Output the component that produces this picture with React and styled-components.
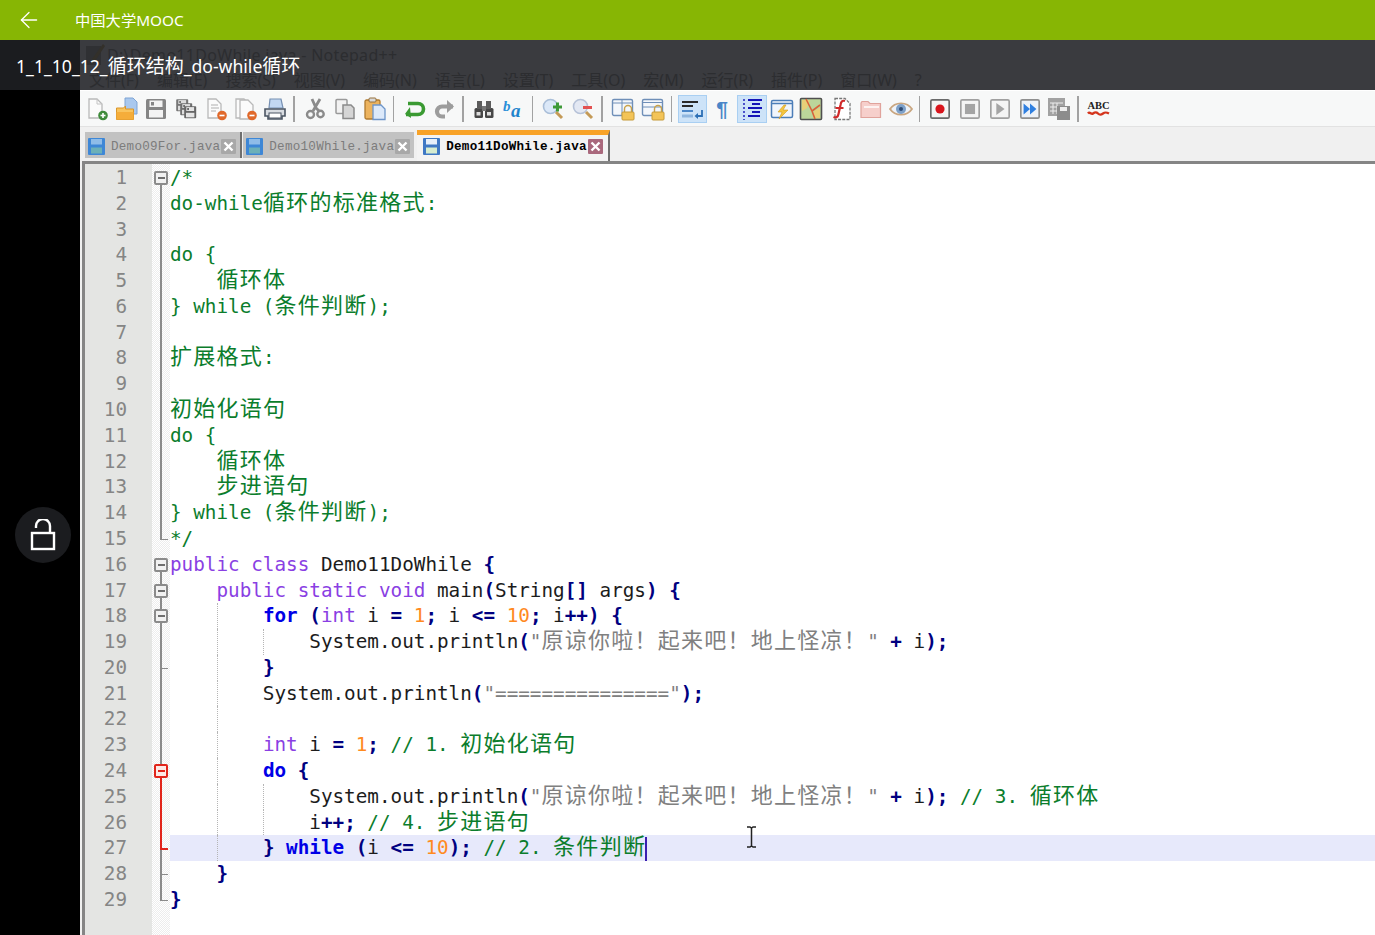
import React from 'react';
import styled, { createGlobalStyle, css } from 'styled-components';
import { ArrowLeft } from 'lucide-react';

const CELL = 11.63;

const GlobalStyle = createGlobalStyle`
    html, body {
        margin: 0;
        padding: 0;
        height: 100%;
        background: #000;
    }
`;

const Page = styled.div`
    width: 100%;
    height: 935px;
    display: flex;
    flex-direction: column;
    overflow: hidden;
    font-family: "Noto Sans", "Noto Sans CJK SC", sans-serif;
`;

const TopBar = styled.header`
    height: 40px;
    flex: none;
    display: flex;
    align-items: center;
    gap: 33px;
    padding-left: 16px;
    background: #87b604;
    color: #fff;
`;

const TopTitle = styled.span`
    font-size: 15.3px;
    margin-top: -2px;
`;

const Player = styled.div`
    position: relative;
    flex: 1;
    min-height: 0;
    display: flex;
`;

const Side = styled.div`
    width: 80px;
    flex: none;
    background: #000;
    &::before {
        content: '';
        display: block;
        height: 50px;
        background: #1b1c1f;
    }
`;

const Caption = styled.div`
    position: absolute;
    left: 16px;
    top: 12px;
    color: #fff;
    font-size: 17.6px;
    line-height: 28px;
    white-space: pre;
`;

const CaptionCjk = styled.span`
    font-family: "Noto Sans CJK SC", sans-serif;
    font-size: 19px;
    line-height: 1;
`;

const LockButton = styled.div`
    position: absolute;
    left: 15px;
    top: 467px;
    width: 56px;
    height: 56px;
    border-radius: 50%;
    background: #1b1c1f;
    display: flex;
    align-items: center;
    justify-content: center;
`;

const Screen = styled.div`
    flex: 1;
    min-width: 0;
    display: flex;
    flex-direction: column;
    background: #f0f0f0;
`;

const WindowHead = styled.div`
    height: 50px;
    flex: none;
    background: #3a3b3f;
    color: #2c2d30;
    overflow: hidden;
`;

const TitleRow = styled.div`
    height: 30px;
    display: flex;
    align-items: center;
    gap: 1px;
    padding-left: 4px;
    font-size: 16px;
    letter-spacing: 0.3px;
`;

const MenuRow = styled.div`
    display: flex;
    gap: 18px;
    padding-left: 9px;
    font-size: 16px;
    line-height: 20px;
`;

const Toolbar = styled.div`
    height: 37px;
    flex: none;
    display: flex;
    align-items: center;
    padding-left: 2px;
    background: #f7f8f8;
    border-top: 1px solid #fff;
    border-bottom: 1px solid #e2e2e2;
    box-sizing: border-box;
`;

const ToolButton = styled.div`
    width: 29.75px;
    height: 28px;
    flex: none;
    box-sizing: border-box;
    display: flex;
    align-items: center;
    justify-content: center;
    ${(p) => p.$on && css`
        background: #cde3f8;
        border: 1px solid #a9cff2;
    `}
`;

const ToolSep = styled.div`
    width: 10px;
    height: 26px;
    flex: none;
    &::before {
        content: '';
        display: block;
        margin-left: 3px;
        width: 1.5px;
        height: 100%;
        background: #a2a2a2;
    }
`;

const TabBar = styled.div`
    height: 34px;
    flex: none;
    display: flex;
    padding-left: 5px;
    background: #f0f0f0;
`;

const Tab = styled.div`
    display: flex;
    align-items: center;
    box-sizing: border-box;
    font-family: "Liberation Mono", monospace;
    font-size: 12.6px;
    letter-spacing: 0.25px;
    white-space: pre;
    ${(p) => (p.$active ? css`
        height: 31px;
        margin: 3px 0 0 3px;
        padding: 0 5px 4px 6px;
        border-top: 5px solid #f8a227;
        border-right: 2px solid #6f6f6f;
        color: #000;
        font-weight: 700;
        background: #f3f3f3;
    ` : css`
        height: 26px;
        margin-top: 5px;
        padding: 2px 4px 0 3px;
        color: #7c7c7c;
        background: #c2c2c2;
    `)}
    ${(p) => p.$divider && css`
        box-shadow: 2px 0 0 #6f6f6f;
        margin-right: 3px;
    `}
`;

const TabLabel = styled.span`
    margin: 2px 1px 0 6px;
`;

const Editor = styled.main`
    flex: 1;
    min-height: 0;
    margin-left: 2px;
    display: flex;
    border-left: 3px solid #858585;
    border-top: 3px solid #858585;
    background: #fff;
    font-family: "DejaVu Sans Mono", "Noto Sans CJK SC", monospace;
    font-size: 19.3px;
    position: relative;
`;

const Gutter = styled.div`
    width: 67px;
    flex: none;
    padding-top: 1px;
    background: #e4e5e3;
    color: #858585;
    text-align: right;
`;

const GutterNum = styled.div`
    height: 25.786px;
    line-height: 25.786px;
    padding-right: 25px;
`;

const FoldColumn = styled.div`
    width: 18px;
    flex: none;
    padding-top: 1px;
    background-color: #fff;
    background-image: conic-gradient(#ededed 25%, #fff 0 50%, #ededed 0 75%, #fff 0);
    background-size: 2px 2px;
`;

const GREY = '#8b8b8b';
const RED = '#e1251b';

const FoldCell = styled.div`
    position: relative;
    height: 25.786px;
    &::before {
        content: '';
        position: absolute;
        left: 8px;
        width: 2px;
        top: 0;
        bottom: 0;
        display: ${(p) => (p.$kind ? 'block' : 'none')};
        background: ${(p) => {
            switch (p.$kind) {
                case 'rootBox':
                    return `linear-gradient(transparent 50%, ${GREY} 50%)`;
                case 'redBox':
                    return `linear-gradient(${GREY} 50%, ${RED} 50%)`;
                case 'redLine':
                    return RED;
                case 'redTick':
                    return `linear-gradient(${RED} 50%, ${GREY} 50%)`;
                case 'end':
                    return `linear-gradient(${GREY} 50%, transparent 50%)`;
                default:
                    return GREY;
            }
        }};
    }
    ${(p) => ['tick', 'redTick', 'end'].includes(p.$kind) && css`
        &::after {
            content: '';
            position: absolute;
            left: 8px;
            top: 50%;
            width: 8px;
            height: 1.5px;
            background: ${p.$kind === 'redTick' ? RED : GREY};
        }
    `}
`;

const FoldBox = styled.div`
    position: absolute;
    left: 2px;
    top: 6px;
    width: 14px;
    height: 14px;
    box-sizing: border-box;
    border: 2px solid ${(p) => (p.$red ? RED : GREY)};
    border-radius: 2px;
    background: ${(p) => (p.$red ? '#fde9e6' : '#f1f1f1')};
    &::after {
        content: '';
        position: absolute;
        left: 1.5px;
        right: 1.5px;
        top: 4px;
        height: 2px;
        background: ${(p) => (p.$red ? RED : '#6e6e6e')};
    }
`;

const CodeColumn = styled.div`
    flex: 1;
    min-width: 0;
    padding-top: 1px;
`;

const CodeLine = styled.div`
    position: relative;
    height: 25.786px;
    line-height: 25.786px;
    white-space: pre;
    color: #1c1c1c;
    ${(p) => p.$current && css`
        background: #e7e9fb;
    `}
`;

const Guide = styled.i`
    position: absolute;
    top: 0;
    bottom: 0;
    left: ${(p) => p.$col * CELL}px;
    border-left: 1px dotted #b5b5b5;
`;

const tokenColors = {
    p: '#1c1c1c',
    c: '#0b7d2c',
    k: '#8a3fe3',
    f: '#0000e6',
    o: '#000080',
    n: '#ff8a1e',
    s: '#808080',
};

const Token = styled.span`
    color: ${(p) => tokenColors[p.$type]};
    font-weight: ${(p) => (p.$type === 'f' || p.$type === 'o' ? 700 : 400)};
`;

const Cjk = styled.span`
    font-family: "Noto Sans CJK SC", sans-serif;
    font-size: 22px;
    line-height: 0;
    letter-spacing: ${CELL * 2 - 22}px;
    font-weight: 400;
`;

const Caret = styled.span`
    display: inline-block;
    width: 1.5px;
    height: 24px;
    vertical-align: middle;
    margin-left: -1px;
    background: #3b1fb0;
`;

const IBeam = styled.svg`
    position: absolute;
    left: 661px;
    top: 662px;
`;

const Pilcrow = styled.span`
    font-family: "Liberation Sans", sans-serif;
    font-size: 21px;
    font-weight: 700;
    color: #4a86c8;
    line-height: 1;
`;

// split a string so that the chinese runs get the double width cells
const withCjk = (text) =>
    text.split(/([\u3000-\u9fff\uff00-\uffef]+)/).map((part, i) =>
        i % 2 ? <Cjk key={i}>{part}</Cjk> : part
    );

const p = (t) => ['p', t];
const c = (t) => ['c', t];
const k = (t) => ['k', t];
const f = (t) => ['f', t];
const o = (t) => ['o', t];
const n = (t) => ['n', t];
const s = (t) => ['s', t];

const lines = [
    { fold: 'rootBox', code: [c('/*')] },
    { fold: 'line', code: [c('do-while循环的标准格式:')] },
    { fold: 'line', code: [] },
    { fold: 'line', code: [c('do {')] },
    { fold: 'line', code: [c('    循环体')] },
    { fold: 'line', code: [c('} while (条件判断);')] },
    { fold: 'line', code: [] },
    { fold: 'line', code: [c('扩展格式:')] },
    { fold: 'line', code: [] },
    { fold: 'line', code: [c('初始化语句')] },
    { fold: 'line', code: [c('do {')] },
    { fold: 'line', code: [c('    循环体')] },
    { fold: 'line', code: [c('    步进语句')] },
    { fold: 'line', code: [c('} while (条件判断);')] },
    { fold: 'end', code: [c('*/')] },
    { fold: 'rootBox', code: [k('public class'), p(' Demo11DoWhile '), o('{')] },
    { fold: 'box', code: [p('    '), k('public static void'), p(' main'), o('('), p('String'), o('[]'), p(' args'), o(')'), p(' '), o('{')] },
    { fold: 'box', guides: [4], code: [p('        '), f('for'), p(' '), o('('), k('int'), p(' i '), o('='), p(' '), n('1'), o(';'), p(' i '), o('<='), p(' '), n('10'), o(';'), p(' i'), o('++)'), p(' '), o('{')] },
    { fold: 'line', guides: [4, 8], code: [p('            System.out.println'), o('('), s('"原谅你啦！起来吧！地上怪凉！"'), p(' '), o('+'), p(' i'), o(');')] },
    { fold: 'tick', guides: [4], code: [p('        '), o('}')] },
    { fold: 'line', guides: [4], code: [p('        System.out.println'), o('('), s('"==============="'), o(');')] },
    { fold: 'line', guides: [4], code: [] },
    { fold: 'line', guides: [4], code: [p('        '), k('int'), p(' i '), o('='), p(' '), n('1'), o(';'), p(' '), c('// 1. 初始化语句')] },
    { fold: 'redBox', guides: [4], code: [p('        '), f('do'), p(' '), o('{')] },
    { fold: 'redLine', guides: [4, 8], code: [p('            System.out.println'), o('('), s('"原谅你啦！起来吧！地上怪凉！"'), p(' '), o('+'), p(' i'), o(');'), p(' '), c('// 3. 循环体')] },
    { fold: 'redLine', guides: [4, 8], code: [p('            i'), o('++;'), p(' '), c('// 4. 步进语句')] },
    { fold: 'redTick', guides: [4], current: true, caret: true, code: [p('        '), o('}'), p(' '), f('while'), p(' '), o('('), p('i '), o('<='), p(' '), n('10'), o(');'), p(' '), c('// 2. 条件判断')] },
    { fold: 'tick', code: [p('    '), o('}')] },
    { fold: 'end', code: [o('}')] },
];

const menus = ['文件(F)', '编辑(E)', '搜索(S)', '视图(V)', '编码(N)', '语言(L)', '设置(T)', '工具(O)', '宏(M)', '运行(R)', '插件(P)', '窗口(W)', '?'];

const Svg = ({ size = 24, children }) => (
    <svg width={size} height={size} viewBox="0 0 24 24" fill="none">{children}</svg>
);

const Floppy = ({ x = 0, y = 0, s: scale = 1, fill = '#8a8a8a', light = '#f3f3f3' }) => (
    <g transform={`translate(${x} ${y}) scale(${scale})`}>
        <rect x="2" y="2" width="20" height="20" rx="1.5" fill={fill} />
        <rect x="5.5" y="3.5" width="13" height="6.5" fill={light} />
        <rect x="7" y="5" width="3" height="3.5" fill={fill} />
        <rect x="5" y="13" width="14" height="7.5" fill={light} />
    </g>
);

const Page2 = ({ x = 0, y = 0 }) => (
    <path d={`M${x + 5} ${y + 2}h8l5 5v14h-13z`} fill="#fbfbfb" stroke="#b9b9b9" strokeWidth="1.3" />
);

const Badge = ({ color, plus }) => (
    <g>
        <circle cx="18" cy="18.5" r="4.8" fill={color} />
        <path d="M15.5 18.5h5" stroke="#fff" strokeWidth="1.6" />
        {plus && <path d="M18 16v5" stroke="#fff" strokeWidth="1.6" />}
    </g>
);

const icons = {
    newFile: <Svg><Page2 x={-1} /><path d="M12 2v5h5" stroke="#c4c4c4" /><Badge color="#3f8b3b" plus /></Svg>,
    open: (
        <Svg>
            <path d="M10 1h8l4 4v12H10z" fill="#a9c8ee" stroke="#7ea4d4" />
            <path d="M1.5 11h7l2-2v3h8v10.5h-17z" fill="#f9c45d" stroke="#d9952a" />
            <rect x="1.5" y="15" width="17" height="7.5" fill="#f5ad3a" />
        </Svg>
    ),
    save: <Svg><Floppy fill="#858585" /></Svg>,
    saveAll: (
        <Svg>
            <Floppy x={1} y={1} s={0.6} fill="#777" light="#ddd" />
            <Floppy x={5} y={5} s={0.6} fill="#6f6f6f" light="#ddd" />
            <Floppy x={9} y={8} s={0.6} fill="#666" light="#e4e4e4" />
        </Svg>
    ),
    close: (
        <Svg>
            <Page2 x={-1} />
            <path d="M7 8h7M7 11h8M7 14h5" stroke="#b0b0b0" strokeWidth="1.2" />
            <Badge color="#e0682a" />
        </Svg>
    ),
    closeAll: (
        <Svg>
            <Page2 x={-3} y={0} />
            <Page2 x={1} y={1} />
            <Badge color="#e0682a" />
        </Svg>
    ),
    print: (
        <Svg>
            <path d="M7 2h11l2 9H6z" fill="#c2d8f2" stroke="#7690b2" strokeWidth="1.2" />
            <path d="M2 12h20v7h-3v3H5v-3H2z" fill="#d9dde2" stroke="#4b5563" strokeWidth="1.6" />
            <rect x="6" y="16" width="12" height="5" fill="#fff" stroke="#4b5563" />
        </Svg>
    ),
    cut: (
        <Svg>
            <path d="M17 2l-7 12M9 2l4 9 3 3" stroke="#8b8b8b" strokeWidth="2.8" />
            <circle cx="7.5" cy="17.5" r="3.5" stroke="#8b8b8b" strokeWidth="2.4" />
            <circle cx="17.5" cy="17" r="3.2" stroke="#8b8b8b" strokeWidth="2.4" />
        </Svg>
    ),
    copy: (
        <Svg>
            <rect x="3" y="2.5" width="11" height="14" rx="1" fill="#f2f2f2" stroke="#9a9a9a" strokeWidth="1.5" />
            <path d="M10 8h8l3 3v10.5H10z" fill="#d5d5d5" stroke="#8b8b8b" strokeWidth="1.5" />
        </Svg>
    ),
    paste: (
        <Svg>
            <rect x="2" y="3" width="15" height="19" rx="1.5" fill="#ecb35e" stroke="#b07a2e" strokeWidth="1.3" />
            <rect x="6" y="1" width="7" height="4" rx="1" fill="#d9d9d9" stroke="#96703a" />
            <path d="M10 8h8l4 4v10.5H10z" fill="#dce9fa" stroke="#6d95c9" strokeWidth="1.3" />
        </Svg>
    ),
    undo: (
        <Svg>
            <path d="M6 6.5h10a5.5 5.5 0 0 1 0 11H4" stroke="#3a9a32" strokeWidth="3.6" />
            <path d="M8 10.5L3 17.5l6 4z" fill="#3a9a32" transform="translate(0 -0.5)" />
        </Svg>
    ),
    redo: (
        <Svg>
            <path d="M21 9.5H10a5 5 0 0 0 0 10h3" stroke="#9c9c9c" strokeWidth="4.2" />
            <path d="M15 3l7 6.5L15 16z" fill="#9c9c9c" />
        </Svg>
    ),
    find: (
        <Svg>
            <rect x="2.5" y="11" width="8.5" height="10" rx="1.5" fill="#474747" />
            <rect x="13" y="11" width="8.5" height="10" rx="1.5" fill="#474747" />
            <rect x="5" y="4" width="5" height="8" fill="#5c5c5c" />
            <rect x="14" y="4" width="5" height="8" fill="#5c5c5c" />
            <rect x="10" y="9" width="4" height="5" fill="#777" />
            <rect x="4.5" y="15" width="4" height="3.5" fill="#ddd" />
            <rect x="15" y="15" width="4" height="3.5" fill="#ddd" />
        </Svg>
    ),
    replace: (
        <Svg>
            <text x="1" y="14" fontFamily="Liberation Serif, serif" fontStyle="italic" fontWeight="700" fontSize="15" fill="#2a8fd8">b</text>
            <text x="9" y="20" fontFamily="Liberation Serif, serif" fontStyle="italic" fontWeight="700" fontSize="19" fill="#1f84cc">a</text>
        </Svg>
    ),
    zoomIn: (
        <Svg>
            <circle cx="9.5" cy="9.5" r="7" fill="#dbe8f8" stroke="#a9bed8" strokeWidth="1.6" />
            <path d="M15 15l6 6" stroke="#c49a57" strokeWidth="3" />
            <path d="M12 10h9M16.5 5.5v9" stroke="#3e9a38" strokeWidth="3" />
        </Svg>
    ),
    zoomOut: (
        <Svg>
            <circle cx="9.5" cy="9.5" r="7" fill="#e3e8f3" stroke="#b6c2d8" strokeWidth="1.6" />
            <path d="M15 15l6 6" stroke="#c49a57" strokeWidth="3" />
            <path d="M12 10.5h9" stroke="#e35252" strokeWidth="3" />
        </Svg>
    ),
    syncV: (
        <Svg>
            <rect x="1.5" y="2.5" width="20" height="16" rx="1.5" fill="#f4f7fb" stroke="#6f8fb8" strokeWidth="1.4" />
            <path d="M11 3v15M2 6h19" stroke="#6f8fb8" />
            <path d="M13.5 15v-3a3.5 3.5 0 0 1 7 0v3" stroke="#c9a24a" strokeWidth="1.4" />
            <rect x="11" y="15" width="12" height="8" rx="1" fill="#f3c458" stroke="#c69a38" />
        </Svg>
    ),
    syncH: (
        <Svg>
            <rect x="1.5" y="2.5" width="20" height="16" rx="1.5" fill="#f4f7fb" stroke="#6f8fb8" strokeWidth="1.4" />
            <path d="M2 10h19M2 5.5h19" stroke="#6f8fb8" />
            <path d="M13.5 15v-3a3.5 3.5 0 0 1 7 0v3" stroke="#c9a24a" strokeWidth="1.4" />
            <rect x="11" y="15" width="12" height="8" rx="1" fill="#f3c458" stroke="#c69a38" />
        </Svg>
    ),
    wrap: (
        <Svg>
            <path d="M2 5h16M2 9h11" stroke="#2a2a2a" strokeWidth="2" />
            <path d="M2 14h11" stroke="#4a86c8" strokeWidth="2" />
            <path d="M2 19h11" stroke="#8fb6df" strokeWidth="3" />
            <path d="M22 13v6h-6" stroke="#2c6fb5" strokeWidth="1.8" />
            <path d="M18 16l-3.5 3 3.5 3z" fill="#2c6fb5" />
        </Svg>
    ),
    guides: (
        <Svg>
            <path d="M8 3h14M12 7h8M8 11h14M12 15h8M8 19h12" stroke="#1414b8" strokeWidth="2.2" />
            <path d="M4 2v21" stroke="#1414b8" strokeWidth="1.4" strokeDasharray="2 2" />
        </Svg>
    ),
    udl: (
        <Svg>
            <rect x="1.5" y="3.5" width="21" height="17" rx="1.5" fill="#f1f6fc" stroke="#4c7eb8" strokeWidth="1.5" />
            <path d="M2 6.5h20" stroke="#4c7eb8" strokeWidth="1.5" />
            <path d="M14 8l-6 7h4l-3 7 9-9h-5l3-5z" fill="#f4c640" stroke="#d29a20" strokeWidth="0.6" />
        </Svg>
    ),
    map: (
        <Svg>
            <rect x="1.5" y="1.5" width="21" height="21" rx="1" fill="#bcd59a" stroke="#4f4f4f" strokeWidth="1.6" />
            <path d="M3 3h8l-3 8-5 3zM15 14l6-3v10h-7z" fill="#e9cf78" />
            <path d="M7 2l6 12 3 8M13 14l8-6" stroke="#d9623a" strokeWidth="1.6" />
        </Svg>
    ),
    func: (
        <Svg>
            <path d="M6 1.5h10l5 5v16H6z" fill="#fff" stroke="#777" strokeWidth="1.3" strokeDasharray="3 1.2" />
            <path d="M16 4c-3-1-4 1-4.5 4l-2 9c-.5 3-2.5 4-5 3M6.5 11h8" stroke="#d02a2a" strokeWidth="2.2" />
        </Svg>
    ),
    folder: (
        <Svg>
            <path d="M2 6l1-1.5h6l2 2h10.5v14H2z" fill="#f6cfcb" stroke="#e0a39c" strokeWidth="1.2" />
            <path d="M5 10h15" stroke="#fff" strokeWidth="1.5" />
        </Svg>
    ),
    eye: (
        <Svg>
            <path d="M1 12c5-7.5 17-7.5 22 0-5 7.5-17 7.5-22 0z" fill="#edf2f8" stroke="#c9a680" strokeWidth="1.8" />
            <circle cx="12" cy="12" r="5" fill="#7da0c8" />
            <circle cx="12" cy="12" r="2" fill="#2e4a72" />
        </Svg>
    ),
    record: (
        <Svg size={22}>
            <rect x="2" y="2" width="20" height="20" rx="1.5" fill="#f4f4f4" stroke="#6a6a6a" strokeWidth="1.8" />
            <circle cx="12" cy="12" r="5" fill="#d8141c" />
        </Svg>
    ),
    stop: (
        <Svg size={22}>
            <rect x="2" y="2" width="20" height="20" rx="1.5" fill="#f4f4f4" stroke="#a0a0a0" strokeWidth="1.8" />
            <rect x="6.5" y="6.5" width="11" height="11" fill="#a4a4a4" />
        </Svg>
    ),
    play: (
        <Svg size={22}>
            <rect x="2" y="2" width="20" height="20" rx="1.5" fill="#f4f4f4" stroke="#a0a0a0" strokeWidth="1.8" />
            <path d="M8 5.5L17 12l-9 6.5z" fill="#a4a4a4" />
        </Svg>
    ),
    playMulti: (
        <Svg size={22}>
            <rect x="2" y="2" width="20" height="20" rx="1.5" fill="#eef2f8" stroke="#8f8f8f" strokeWidth="1.8" />
            <path d="M5 6l7 6-7 6zM12 6l7 6-7 6z" fill="#2f7fe0" />
        </Svg>
    ),
    saveMacro: (
        <Svg>
            <rect x="1" y="1" width="17" height="18" fill="#a2a2a2" />
            <path d="M3 6h13M3 10h7M3 14h7M6 6v11M10 6v11" stroke="#eee" />
            <rect x="10" y="9" width="13" height="14" fill="#8c8c8c" />
            <rect x="13" y="10" width="7" height="4" fill="#eee" />
        </Svg>
    ),
    spell: (
        <Svg>
            <text x="0.5" y="12" fontFamily="Liberation Serif, serif" fontWeight="700" fontSize="10.5" fill="#222">ABC</text>
            <path d="M1 16.5c2-2.5 3 1.5 5 0s3-2 5 0 3 1.5 5 0 3-1.5 6 0" stroke="#d4341c" strokeWidth="2.4" />
        </Svg>
    ),
};

const toolbar = [
    ['newFile', 'open', 'save', 'saveAll', 'close', 'closeAll', 'print'],
    ['cut', 'copy', 'paste'],
    ['undo', 'redo'],
    ['find', 'replace'],
    ['zoomIn', 'zoomOut'],
    ['syncV', 'syncH'],
    ['wrap', 'pilcrow', 'guides', 'udl', 'map', 'func', 'folder', 'eye'],
    ['record', 'stop', 'play', 'playMulti', 'saveMacro'],
    ['spell'],
];

const activeTools = ['wrap', 'guides'];

const TabDisk = ({ active }) => (
    <svg width="17" height="17" viewBox="0 0 17 17">
        <rect width="17" height="17" rx="1" fill={active ? '#3f78c4' : '#3e87d6'} />
        <rect x="3" y="1" width="11" height="5.5" fill={active ? '#e6effa' : '#8fbce8'} />
        <rect x="3" y="9.5" width="11" height="6" fill={active ? '#d6ecd0' : '#6cb0b8'} />
    </svg>
);

const TabClose = ({ active }) => (
    <svg width="15" height="15" viewBox="0 0 15 15">
        <rect width="15" height="15" rx="1" fill={active ? '#a9687c' : '#a8a8a8'} />
        <path d="M3.5 3.5l8 8M11.5 3.5l-8 8" stroke="#fff" strokeWidth="2.4" />
    </svg>
);

const tabs = [
    { name: 'Demo09For.java', divider: true },
    { name: 'Demo10While.java' },
    { name: 'Demo11DoWhile.java', active: true },
];

const App = () => (
    <Page>
        <GlobalStyle />
        <TopBar>
            <ArrowLeft size={26} strokeWidth={1.2} color="#fff" />
            <TopTitle>中国大学MOOC</TopTitle>
        </TopBar>
        <Player>
            <Side />
            <Screen>
                <WindowHead>
                    <TitleRow>
                        <svg width="22" height="24" viewBox="0 0 22 24">
                            <path d="M2 3h15v19H2z" fill="#2f3033" />
                            <path d="M8 16L19 1l2 2L11 18z" fill="#33302a" />
                        </svg>
                        <span>D:\Demo11DoWhile.java - Notepad++</span>
                    </TitleRow>
                    <MenuRow>
                        {menus.map((m) => <span key={m}>{m}</span>)}
                    </MenuRow>
                </WindowHead>
                <Toolbar>
                    {toolbar.map((group, i) => (
                        <React.Fragment key={i}>
                            {i > 0 && <ToolSep />}
                            {group.map((name) => (
                                <ToolButton key={name} $on={activeTools.includes(name)}>
                                    {name === 'pilcrow' ? <Pilcrow>¶</Pilcrow> : icons[name]}
                                </ToolButton>
                            ))}
                        </React.Fragment>
                    ))}
                </Toolbar>
                <TabBar>
                    {tabs.map((t) => (
                        <Tab key={t.name} $active={t.active} $divider={t.divider}>
                            <TabDisk active={t.active} />
                            <TabLabel>{t.name}</TabLabel>
                            <TabClose active={t.active} />
                        </Tab>
                    ))}
                </TabBar>
                <Editor>
                    <Gutter>
                        {lines.map((_, i) => <GutterNum key={i}>{i + 1}</GutterNum>)}
                    </Gutter>
                    <FoldColumn>
                        {lines.map((l, i) => (
                            <FoldCell key={i} $kind={l.fold}>
                                {['box', 'rootBox', 'redBox'].includes(l.fold) && <FoldBox $red={l.fold === 'redBox'} />}
                            </FoldCell>
                        ))}
                    </FoldColumn>
                    <CodeColumn>
                        {lines.map((l, i) => (
                            <CodeLine key={i} $current={l.current}>
                                {(l.guides || []).map((col) => <Guide key={col} $col={col} />)}
                                {l.code.map(([type, text], j) => (
                                    <Token key={j} $type={type}>{withCjk(text)}</Token>
                                ))}
                                {l.caret && <Caret />}
                            </CodeLine>
                        ))}
                    </CodeColumn>
                    <IBeam width="11" height="22" viewBox="0 0 11 22">
                        <path d="M1 1h3l1.5 1L7 1h3M5.5 2v18M1 21h3l1.5-1L7 21h3" stroke="#222" strokeWidth="1.5" fill="none" />
                    </IBeam>
                </Editor>
            </Screen>
            <Caption>1_1_10_12_<CaptionCjk>循环结构</CaptionCjk>_do-while<CaptionCjk>循环</CaptionCjk></Caption>
            <LockButton>
                <svg width="26" height="32" viewBox="0 0 26 32" fill="none" stroke="#fff" strokeWidth="2.4">
                    <rect x="2" y="14" width="22" height="16" />
                    <path d="M6 9V7a7 7 0 0 1 14 0v7" />
                </svg>
            </LockButton>
        </Player>
    </Page>
);

export default App;
